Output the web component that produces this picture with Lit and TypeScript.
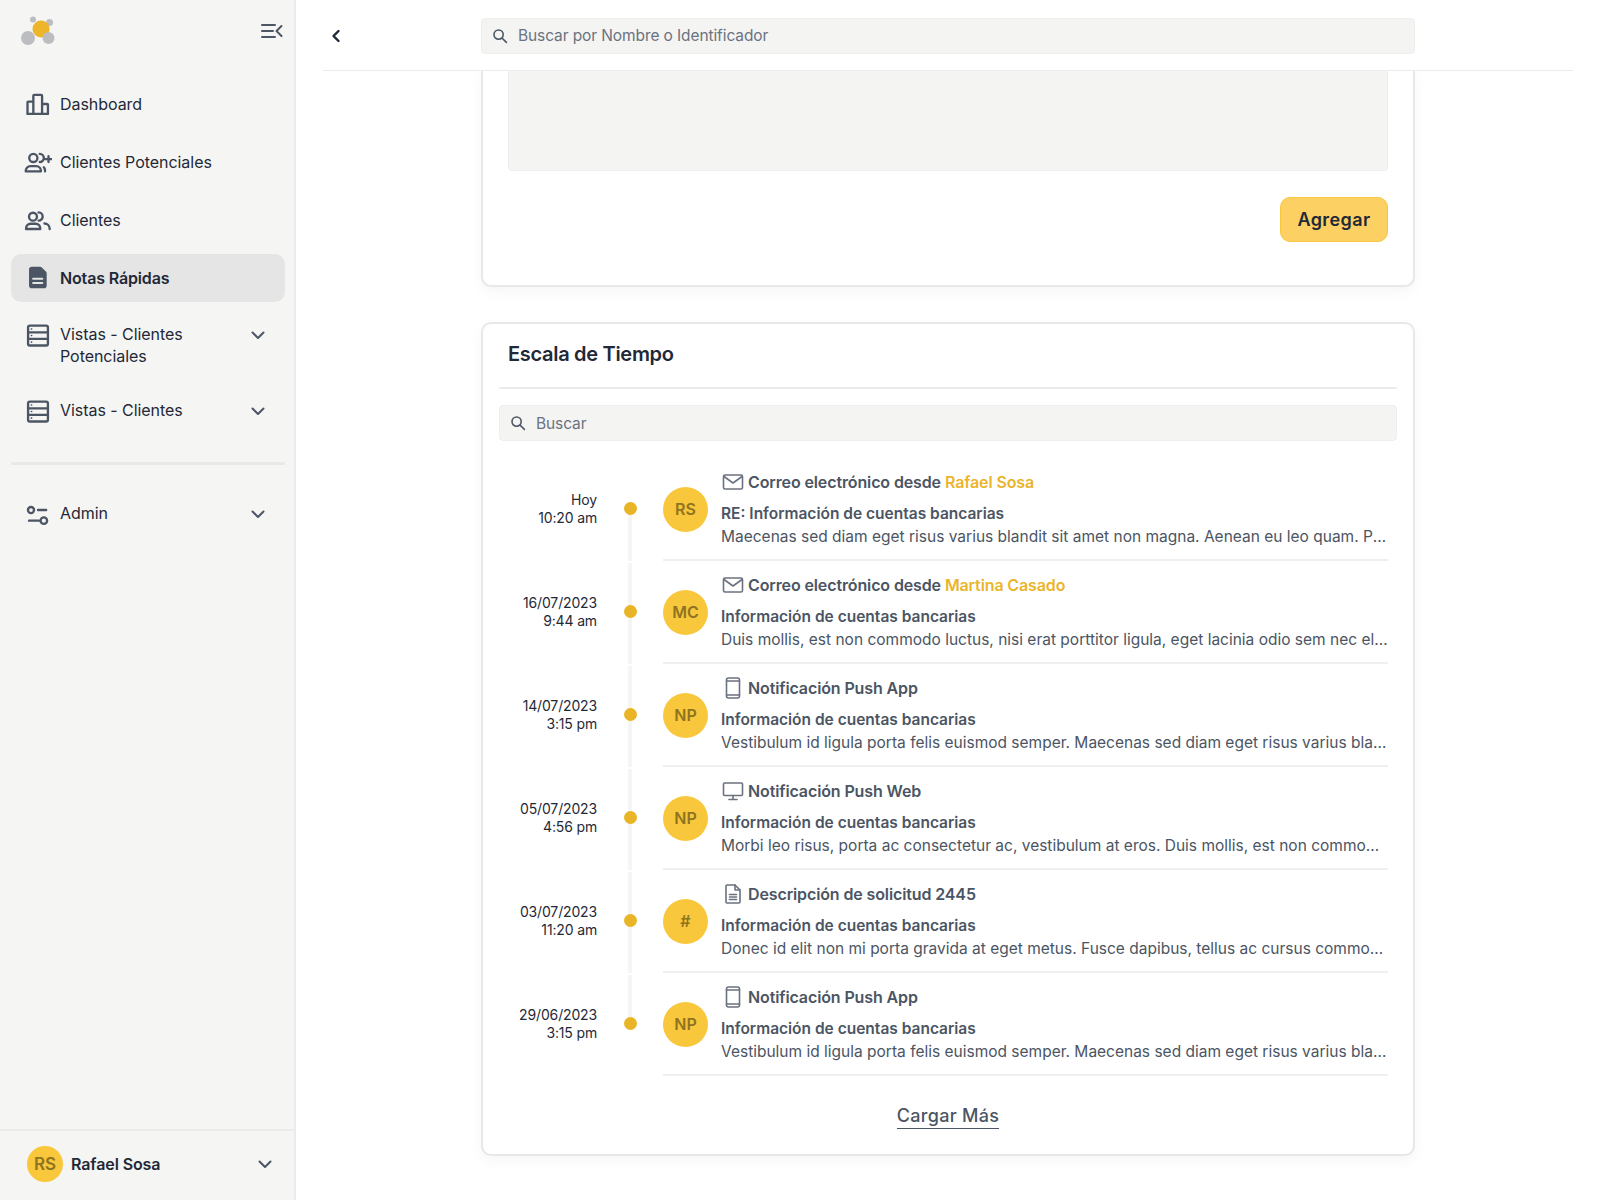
import { LitElement, html, css, svg } from "lit";
import { customElement } from "lit/decorators.js";

const ic = (body: unknown, size = 28) => html`<svg class="ic" width=${size} height=${size} viewBox="0 0 24 24" fill="none" stroke="currentColor" stroke-width="2" stroke-linecap="round" stroke-linejoin="round">${body}</svg>`;

const chevron = html`<svg class="chev" width="20" height="20" viewBox="0 0 20 20" fill="none" stroke="currentColor" stroke-width="2" stroke-linecap="round" stroke-linejoin="round"><path d="M4.500 7.500 10 13l5.500-5.500"/></svg>`;
const search = html`<svg class="srch" width="16" height="16" viewBox="0 0 16 16" fill="none" stroke="currentColor" stroke-width="1.600" stroke-linecap="round"><circle cx="6.600" cy="6.600" r="4.600"/><path d="m10.200 10.200 4.200 4.200"/></svg>`;

const icons = {
  dash: svg`<path d="M3 20.500h17.500V12.500a.5.5 0 0 0-.5-.5H15.500V5a.8.8 0 0 0-.8-.8H8.800a.8.8 0 0 0-.8.8V10H3.500a.5.5 0 0 0-.5.5zM8 10v10.500M15.500 12v8.500"/>`,
  leads: svg`<circle cx="8" cy="8.500" r="3.500"/><path d="M1.500 20v-.5a4 4 0 0 1 4-4h5a4 4 0 0 1 4 4v.5zM13.500 5a3.500 3.500 0 0 1 0 7M18 20v-1a4 4 0 0 0-1-2.500M21 7v5M18.500 9.500h5"/>`,
  clients: svg`<circle cx="7.700" cy="9.200" r="3.400"/><path d="M1.800 19.700v-.7a3.800 3.800 0 0 1 3.800-3.800h4.500a3.800 3.800 0 0 1 3.800 3.800v.7zM12.500 5.500a3.500 3.500 0 0 1 0 7M17.500 15a4.500 4.500 0 0 1 4.500 4.500v.2"/>`,
  table: svg`<rect x="3.500" y="4" width="17" height="17" rx="1.500"/><path d="M3.500 9.700h17M3.500 15.300h17"/><path d="M6.300 6.900h.3M6.300 12.500h.3M6.300 18.100h.3" stroke-width="1.300"/>`,
  admin: svg`<circle cx="6" cy="8.600" r="2.600"/><circle cx="17" cy="17.700" r="2.800"/><path d="M12 8.600h7M4.300 17.700h8.500"/>`,
  mail: svg`<rect x="2.500" y="5" width="19" height="14" rx="1.500"/><path d="m3 6.500 9 6.500 9-6.500"/>`,
  phone: svg`<rect x="5.500" y="2" width="13" height="20" rx="2"/><path d="M5.500 5h13M5.500 19h13"/>`,
  screen: svg`<rect x="2.500" y="4" width="19" height="12.500" rx="1"/><path d="M12 16.500v3.500M8 20.500h8"/>`,
  doc: svg`<path d="M6 3h8l5 5v12a1 1 0 0 1-1 1H6a1 1 0 0 1-1-1V4a1 1 0 0 1 1-1z"/><path d="M14 3v5h5M8.500 12.500h7M8.500 15h7M8.500 17.500h7"/>`,
};

const rows = [
  { d: "Hoy", t: "10:20 am", av: "RS", i: icons.mail, title: "Correo electrónico desde ", who: "Rafael Sosa", sub: "RE: Información de cuentas bancarias", body: "Maecenas sed diam eget risus varius blandit sit amet non magna. Aenean eu leo quam. Pellentesque ornare sem lacinia quam." },
  { d: "16/07/2023", t: "9:44 am", av: "MC", i: icons.mail, title: "Correo electrónico desde ", who: "Martina Casado", sub: "Información de cuentas bancarias", body: "Duis mollis, est non commodo luctus, nisi erat porttitor ligula, eget lacinia odio sem nec elit. Donec ullamcorper nulla." },
  { d: "14/07/2023", t: "3:15 pm", av: "NP", i: icons.phone, title: "Notificación Push App", who: "", sub: "Información de cuentas bancarias", body: "Vestibulum id ligula porta felis euismod semper. Maecenas sed diam eget risus varius blandit sit amet non magna." },
  { d: "05/07/2023", t: "4:56 pm", av: "NP", i: icons.screen, title: "Notificación Push Web", who: "", sub: "Información de cuentas bancarias", body: "Morbi leo risus, porta ac consectetur ac, vestibulum at eros. Duis mollis, est non commodo luctus, nisi erat porttitor." },
  { d: "03/07/2023", t: "11:20 am", av: "#", i: icons.doc, title: "Descripción de solicitud 2445", who: "", sub: "Información de cuentas bancarias", body: "Donec id elit non mi porta gravida at eget metus. Fusce dapibus, tellus ac cursus commodo, tortor mauris condimentum." },
  { d: "29/06/2023", t: "3:15 pm", av: "NP", i: icons.phone, title: "Notificación Push App", who: "", sub: "Información de cuentas bancarias", body: "Vestibulum id ligula porta felis euismod semper. Maecenas sed diam eget risus varius blandit sit amet non magna." },
];

@customElement("app-root")
export class AppRoot extends LitElement {
  static styles = css`
    :host { display: block; height: 1200px; font-family: Inter, "Liberation Sans", sans-serif; color: #1f2937; }
    * { box-sizing: border-box; }
    .app { display: flex; height: 1200px; overflow: hidden; background: #fff; }
    .side { width: 296px; flex: none; background: #f5f5f4; border-right: 2px solid #ebebeb; display: flex; flex-direction: column; }
    .brand { height: 70px; padding: 0 11px 0 20px; display: flex; justify-content: space-between; align-items: flex-start; }
    .logo { margin-top: 16px; }
    .collapse { margin-top: 23px; color: #4b5563; }
    nav { padding: 10px 9px 0 11px; display: flex; flex-direction: column; gap: 10px; }
    nav.low { padding-top: 0; }
    .item { display: flex; align-items: flex-start; padding: 13px 12px 13px 13px; border-radius: 10px; font-size: 16px; line-height: 22px; color: #1f2937; letter-spacing: -0.05px; }
    .item.multi { padding: 11px 12px 11px 13px; }
    .item .ic { flex: none; color: #4b5563; margin: -3px 0; }
    .item.multi .ic { margin: -2px 0 -6px; }
    .item .lbl { flex: 1; margin-left: 8px; padding-right: 20px; }
    .item .chev { flex: none; color: #4b5563; margin: 2px 5px 0 0; }
    .item.active { background: #e5e5e5; font-weight: 600; letter-spacing: -0.15px; }
    .sep { height: 3px; background: #e9e9e8; margin: 30px 9px 26px 11px; }
    .foot { margin-top: auto; height: 71px; border-top: 2px solid #ebebeb; display: flex; align-items: center; padding: 0 0 4px 27px; }
    .foot .av { width: 36px; height: 36px; font-size: 17px; }
    .foot .name { flex: 1; margin-left: 8px; font-size: 16px; font-weight: 600; letter-spacing: -0.1px; }
    .foot .chev { color: #4b5563; margin-right: 19px; }
    .av { border-radius: 50%; background: #f8c73b; color: #8f7420; font-weight: 600; display: flex; align-items: center; justify-content: center; flex: none; }

    .main { flex: 1; min-width: 0; display: flex; flex-direction: column; }
    .top { height: 71px; flex: none; margin: 0 27px; border-bottom: 1px solid #ececec; display: flex; padding-top: 1px; align-items: center; justify-content: center; }
    .topin { width: 934px; flex: none; position: relative; }
    .back { position: absolute; left: -155px; top: 8px; color: #1f2937; }
    .search { height: 36px; background: #f4f4f3; border: 1px solid #eeeeed; border-radius: 4px; display: flex; align-items: center; padding-left: 10px; color: #6b7280; font-size: 15.500px; letter-spacing: -0.1px; }
    .search .srch { margin-right: 10px; flex: none; color: #4b5563; }

    .scroll { flex: 1; min-height: 0; overflow: hidden; display: flex; flex-direction: column; align-items: center; padding-bottom: 20px; }
    .card { width: 934px; flex: none; background: #fff; border: 2px solid #e8e8e8; border-radius: 10px; box-shadow: 0 5px 14px rgba(0, 0, 0, 0.04); }
    .card.c1 { border-top: none; border-top-left-radius: 0; border-top-right-radius: 0; height: 217px; padding: 0 25px; margin-top: -1px; }
    .area { height: 101px; background: #f4f4f3; border: 1px solid #eeeeed; border-top: none; border-radius: 0 0 4px 4px; }
    .actions { display: flex; justify-content: flex-end; margin-top: 26px; }
    .btn { width: 108px; height: 45px; background: #fcd062; border: 1px solid #f8c843; border-radius: 10px; font-size: 18px; font-weight: 600; letter-spacing: 0.4px; color: #1f2937; display: flex; align-items: center; justify-content: center; }
    .card.c2 { margin-top: 35px; height: 834px; padding: 0 16px; }
    h2 { margin: 0; height: 65px; border-bottom: 2px solid #ebebeb; font-size: 20px; font-weight: 600; letter-spacing: -0.3px; line-height: 24px; padding: 18px 0 0 9px; color: #1f2937; }
    .c2 .search { margin-top: 16px; }
    .list { margin-top: 17px; }
    .row { display: flex; height: 103px; }
    .when { width: 98px; flex: none; align-self: center; margin-top: -2px; text-align: right; font-size: 14px; letter-spacing: -0.15px; line-height: 18px; color: #1f2937; }
    .track { width: 66px; flex: none; position: relative; display: flex; align-items: center; justify-content: center; }
    .track::before { content: ""; position: absolute; left: 31px; width: 4px; top: 2px; bottom: 0; background: #f5f5f4; }
    .row:first-child .track::before { top: 50%; }
    .row:last-child .track::before { bottom: 50%; }
    .dot { width: 13px; height: 13px; border-radius: 50%; background: #e9b526; position: relative; margin-top: -2px; }
    .body { flex: 1; min-width: 0; margin-right: 9px; display: flex; align-items: center; border-bottom: 2px solid #efefef; }
    .body .av { width: 45px; height: 45px; font-size: 16px; margin-top: 1px; }
    .txt { flex: 1; min-width: 0; margin-left: 13px; color: #4b5563; padding-top: 1px; }
    .ttl { display: flex; align-items: center; height: 24px; font-size: 16px; font-weight: 600; letter-spacing: -0.12px; white-space: pre; margin-bottom: 10px; }
    .ttl .ic { color: #6b7280; margin-right: 3px; flex: none; stroke-width: 1.600; }
    .who { color: #eab52b; }
    .sub { font-size: 15.500px; font-weight: 600; line-height: 20px; margin-bottom: 1px; }
    .pre { font-size: 15.500px; line-height: 23px; white-space: nowrap; overflow: hidden; text-overflow: ellipsis; }
    .more { display: flex; justify-content: center; margin-top: 28px; }
    .more span { font-size: 18px; font-weight: 500; letter-spacing: 0.3px; line-height: 24px; color: #4b5563; border-bottom: 1px solid #4b5563; }
  `;

  private nav(icon: unknown, label: string, opts: { chev?: boolean; multi?: boolean } = {}) {
    return html`<div class="item ${opts.multi ? "multi" : ""}">${ic(icon)}<span class="lbl">${label}</span>${opts.chev ? chevron : ""}</div>`;
  }

  render() {
    return html`<div class="app">
      <aside class="side">
        <div class="brand">
          <svg class="logo" width="38" height="32" viewBox="20 16 38 32" aria-label="logo">
            <circle cx="33" cy="19.500" r="3" fill="#bcbdc0"/>
            <circle cx="49.500" cy="22.500" r="3.500" fill="#bcbdc0"/>
            <circle cx="41" cy="29" r="8.500" fill="#ecb52a"/>
            <circle cx="28" cy="38" r="7" fill="#bcbdc0"/>
            <circle cx="48.500" cy="38" r="6" fill="#bcbdc0"/>
          </svg>
          <svg class="collapse" width="22" height="16" viewBox="0 0 22 16" fill="none" stroke="currentColor" stroke-width="2" stroke-linecap="round" stroke-linejoin="round"><path d="M1 2h13M1 8h11M1 14h13M20.500 3l-5 5 5 5"/></svg>
        </div>
        <nav>
          ${this.nav(icons.dash, "Dashboard")}
          ${this.nav(icons.leads, "Clientes Potenciales")}
          ${this.nav(icons.clients, "Clientes")}
          <div class="item active">
            <svg class="ic" width="28" height="28" viewBox="0 0 20 20" fill="currentColor"><path fill-rule="evenodd" clip-rule="evenodd" d="M3.600 3.900a2 2 0 0 1 2-2h5.800a1.500 1.500 0 0 1 1.100.4l3.300 3.300a1.500 1.500 0 0 1 .4 1.100v8.700a2 2 0 0 1-2 2H5.600a2 2 0 0 1-2-2zM6.500 9.800a.7.700 0 0 0 0 1.400h6.600a.7.700 0 0 0 0-1.400zm0 3a.7.700 0 0 0 0 1.400h6.600a.7.700 0 0 0 0-1.400z"/></svg>
            <span class="lbl">Notas Rápidas</span>
          </div>
          ${this.nav(icons.table, "Vistas - Clientes Potenciales", { chev: true, multi: true })}
          ${this.nav(icons.table, "Vistas - Clientes", { chev: true, multi: true })}
        </nav>
        <div class="sep"></div>
        <nav class="low">${this.nav(icons.admin, "Admin", { chev: true, multi: true })}</nav>
        <div class="foot">
          <div class="av">RS</div>
          <div class="name">Rafael Sosa</div>
          ${chevron}
        </div>
      </aside>
      <main class="main">
        <header class="top">
          <div class="topin">
            <svg class="back" width="20" height="20" viewBox="0 0 20 20" fill="none" stroke="currentColor" stroke-width="2.400" stroke-linecap="round" stroke-linejoin="round"><path d="M12.500 5 7.500 10l5 5"/></svg>
            <div class="search">${search}<span>Buscar por Nombre o Identificador</span></div>
          </div>
        </header>
        <div class="scroll">
          <section class="card c1">
            <div class="area"></div>
            <div class="actions"><div class="btn">Agregar</div></div>
          </section>
          <section class="card c2">
            <h2>Escala de Tiempo</h2>
            <div class="search">${search}<span>Buscar</span></div>
            <div class="list">
              ${rows.map((r) => html`<div class="row">
                <div class="when">${r.d}<br />${r.t}</div>
                <div class="track"><div class="dot"></div></div>
                <div class="body">
                  <div class="av">${r.av}</div>
                  <div class="txt">
                    <div class="ttl">${ic(r.i, 24)}<span>${r.title}</span>${r.who ? html`<span class="who">${r.who}</span>` : ""}</div>
                    <div class="sub">${r.sub}</div>
                    <div class="pre">${r.body}</div>
                  </div>
                </div>
              </div>`)}
            </div>
            <div class="more"><span>Cargar Más</span></div>
          </section>
        </div>
      </main>
    </div>`;
  }
}
